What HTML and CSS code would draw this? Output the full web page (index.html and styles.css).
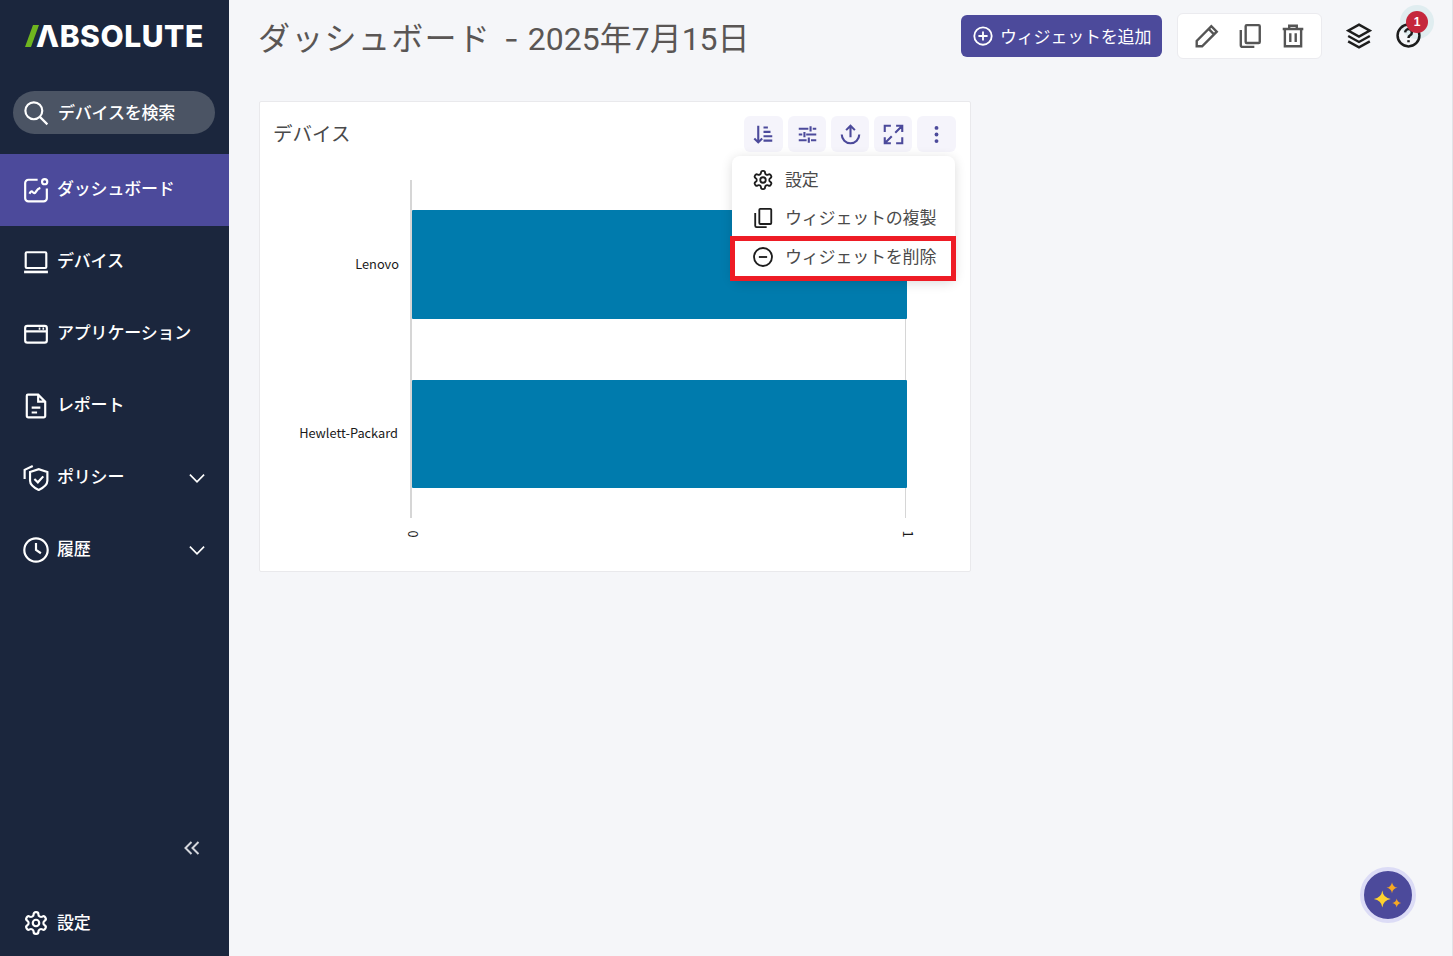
FILE: index.html
```html
<!DOCTYPE html>
<html lang="ja">
<head>
<meta charset="utf-8">
<title>ダッシュボード</title>
<link rel="stylesheet" href="styles.css">
</head>
<body>
<svg class="defs" xmlns="http://www.w3.org/2000/svg">
  <symbol id="gear" viewBox="0 0 24 24"><path d="M12.22 2h-.44a2 2 0 0 0-2 2v.18a2 2 0 0 1-1 1.73l-.43.25a2 2 0 0 1-2 0l-.15-.08a2 2 0 0 0-2.73.73l-.22.38a2 2 0 0 0 .73 2.73l.15.1a2 2 0 0 1 1 1.72v.51a2 2 0 0 1-1 1.74l-.15.09a2 2 0 0 0-.73 2.73l.22.38a2 2 0 0 0 2.73.73l.15-.08a2 2 0 0 1 2 0l.43.25a2 2 0 0 1 1 1.73V20a2 2 0 0 0 2 2h.44a2 2 0 0 0 2-2v-.18a2 2 0 0 1 1-1.73l.43-.25a2 2 0 0 1 2 0l.15.08a2 2 0 0 0 2.73-.73l.22-.39a2 2 0 0 0-.73-2.73l-.15-.08a2 2 0 0 1-1-1.74v-.5a2 2 0 0 1 1-1.74l.15-.09a2 2 0 0 0 .73-2.73l-.22-.38a2 2 0 0 0-2.73-.73l-.15.08a2 2 0 0 1-2 0l-.43-.25a2 2 0 0 1-1-1.73V4a2 2 0 0 0-2-2z"/><circle cx="12" cy="12" r="3"/></symbol>
  <symbol id="copy" viewBox="0 0 24 24"><rect x="8" y="2" width="13" height="16.500" rx="1"/><path d="M3.500 6.500V20.500a1.500 1.500 0 0 0 1.500 1.500H16"/></symbol>
  <symbol id="chev" viewBox="0 0 24 24"><path d="M3.500 8 12 16.500 20.500 8"/></symbol>
</svg>

<aside class="sidebar">
  <div class="logo" aria-label="ABSOLUTE">
    <svg class="logo-slash" viewBox="0 0 14 22"><polygon points="8,0 14,0 6,22 0,22"/></svg>
    <span class="logo-text">ΛBSOLUTE</span>
  </div>
  <div class="search">
    <svg class="ico" viewBox="0 0 24 24"><circle cx="10" cy="10" r="7.800"/><path d="m15.800 15.800 6.700 6.700"/></svg>
    <span>デバイスを検索</span>
  </div>
  <nav class="nav">
    <a class="nav-item active">
      <svg class="ico" viewBox="0 0 24 24"><path d="M13.500 2.500H5a3 3 0 0 0-3 3V19.500a3 3 0 0 0 3 3h14a3 3 0 0 0 3-3V10.500"/><circle cx="20" cy="4.300" r="2.400"/><path d="M6 15.500c1-2.200 2-2.800 3-1.500s2 1.300 3-.5 2-3 4-3.500"/></svg>
      <span>ダッシュボード</span>
    </a>
    <a class="nav-item">
      <svg class="ico" viewBox="0 0 24 24"><rect x="2.500" y="3" width="19" height="14.500" rx="1"/><path class="thick" d="M1 21.200h22"/></svg>
      <span>デバイス</span>
    </a>
    <a class="nav-item">
      <svg class="ico" viewBox="0 0 24 24"><rect x="2" y="4.500" width="20" height="15.500" rx="2"/><path d="M2 9.500h20M14.500 7h1.500M18 7h1.500"/></svg>
      <span>アプリケーション</span>
    </a>
    <a class="nav-item">
      <svg class="ico" viewBox="0 0 24 24"><path d="M3.500 2.500a1 1 0 0 1 1-1h9.500l6.500 6.500V21a1.500 1.500 0 0 1-1.500 1.500H5A1.500 1.500 0 0 1 3.500 21zM14 1.500V8h6.500M8 13.500h8M8 18h5"/></svg>
      <span>レポート</span>
    </a>
    <a class="nav-item">
      <svg class="ico" viewBox="0 0 24 24"><path d="M6.500 6.500 14.500 3.800l8 2.700v8c0 4-3.800 6.500-8 8.500-4.200-2-8-4.500-8-8.500z"/><path d="m10.500 13 3.200 3 5-5.500"/><path d="M1.500 13V4.500L9 1"/></svg>
      <span>ポリシー</span>
      <svg class="chev"><use href="#chev"/></svg>
    </a>
    <a class="nav-item">
      <svg class="ico" viewBox="0 0 24 24"><circle cx="12" cy="12" r="10.800"/><path d="M12 5.500V12l4.500 3"/></svg>
      <span>履歴</span>
      <svg class="chev"><use href="#chev"/></svg>
    </a>
  </nav>
  <div class="collapse">
    <svg viewBox="0 0 16 14"><path d="M7.500 1 1.500 7l6 6M14.500 1l-6 6 6 6"/></svg>
  </div>
  <a class="settings">
    <svg class="ico"><use href="#gear"/></svg>
    <span>設定</span>
  </a>
</aside>

<main class="main">
  <header class="topbar">
    <h1 class="title"><span class="title-kana">ダッシュボード</span> <span class="title-dash">-</span> 2025年7月15日</h1>
    <button class="add-btn">
      <svg viewBox="0 0 24 24"><circle cx="12" cy="12" r="9.500"/><path d="M12 7v10M7 12h10"/></svg>
      <span>ウィジェットを追加</span>
    </button>
    <div class="tools">
      <svg viewBox="0 0 24 24"><path d="M2.500 21.500v-5L16 3l5 5L7.500 21.500zM13.500 5.500l5 5"/></svg>
      <svg><use href="#copy"/></svg>
      <svg viewBox="0 0 24 24"><path d="M2.500 5.500h19M8.500 5V2.500h7V5M4.500 5.500V21.500h15V5.500M9.500 9.500v8M14.500 9.500v8"/></svg>
    </div>
    <svg class="layers" viewBox="0 0 24 24"><path d="m12 1.500 10 5.500-10 5.500L2 7zM2 12l10 5.500L22 12M2 17l10 5.500L22 17"/></svg>
    <div class="help">
      <div class="halo"></div>
      <svg viewBox="0 0 24 24"><circle cx="12" cy="12" r="10.500"/><path d="M8.800 9a3.200 3.200 0 1 1 4.800 2.800c-1 .6-1.600 1.200-1.600 2.500"/><path d="M12 16.500v2"/></svg>
      <div class="badge">1</div>
    </div>
  </header>

  <section class="card">
    <div class="card-head">
      <h2 class="card-title">デバイス</h2>
      <div class="card-actions">
        <div class="act w39"><svg viewBox="0 0 24 24"><path d="M6 2v19M1.500 16.500 6 21l4.500-4.500M12 4h5M12 9h8M12 14h10M12 19h10"/></svg></div>
        <div class="act w38"><svg viewBox="0 0 24 24"><path d="M2 5.500h11M18 5.500h4M15.500 2.500v6M2 12h4M10.500 12H22M8.500 9v6M2 18.500h9M16 18.500h6M13.500 15.500v6"/></svg></div>
        <div class="act w38"><svg viewBox="0 0 24 24"><path d="M7 7l5-5 5 5M12 2V15M2 12a10 10 0 0 0 20 0"/></svg></div>
        <div class="act w38"><svg viewBox="0 0 24 24"><path d="M9 2H2v7M22 15v7h-7M15 2h7v7M22 2l-8 8M2 15v7h7M2 22l8-8"/></svg></div>
        <div class="act w39"><svg class="dots" viewBox="0 0 24 24"><circle cx="12" cy="4.500" r="2.200"/><circle cx="12" cy="12" r="2.200"/><circle cx="12" cy="19.500" r="2.200"/></svg></div>
      </div>
    </div>
    <svg class="chart" viewBox="0 0 711 424">
      <path class="axis-l" d="M151 0V338"/>
      <path class="axis-r" d="M645.500 0V338"/>
      <rect class="bar" x="152" y="30" width="495" height="109" rx="1"/>
      <rect class="bar" x="152" y="200" width="495" height="108" rx="1"/>
      <text class="tick" x="139" y="89" text-anchor="end">Lenovo</text>
      <text class="tick" x="138" y="258" text-anchor="end">Hewlett-Packard</text>
      <text class="tick" transform="translate(152 354) rotate(90)" text-anchor="middle" x="0" y="4">0</text>
      <text class="tick" transform="translate(647 354) rotate(90)" text-anchor="middle" x="0" y="4">1</text>
    </svg>

    <div class="menu">
      <div class="menu-item">
        <svg><use href="#gear"/></svg><span>設定</span>
      </div>
      <div class="menu-item">
        <svg><use href="#copy"/></svg><span>ウィジェットの複製</span>
      </div>
      <div class="menu-item highlighted">
        <svg viewBox="0 0 24 24"><circle cx="12" cy="12" r="9.800"/><path d="M7.500 12h9"/></svg><span>ウィジェットを削除</span>
      </div>
    </div>
  </section>

  <button class="assist">
    <svg viewBox="0 0 32 32">
      <path class="s1" d="M10.300 11.500Q11.300 19 18.800 20 11.300 21 10.300 28.500 9.300 21 1.800 20 9.300 19 10.300 11.500z"/>
      <path class="s2" d="M20 3.200Q20.700 8 25.500 8.700 20.700 9.400 20 14.200 19.300 9.400 14.500 8.700 19.300 8 20 3.200z"/>
      <path class="s2" d="M24.700 19.500Q25.300 23.400 29.200 24 25.300 24.600 24.700 28.500 24.100 24.600 20.200 24 24.100 23.400 24.700 19.500z"/>
    </svg>
  </button>
</main>
</body>
</html>
```

FILE: styles.css
```css
* { box-sizing: border-box; }

html, body { height: 100%; }

body {
  margin: 0;
  display: flex;
  height: 956px;
  overflow: hidden;
  background: #f5f6f9;
  font-family: "Noto Sans CJK JP", "Noto Sans", sans-serif;
  color: #4a4a4a;
}

.defs { display: none; }

svg { display: block; fill: none; stroke: currentColor; stroke-width: 2; flex: none; }

/* Sidebar */
.sidebar {
  width: 229px;
  flex: none;
  display: flex;
  flex-direction: column;
  background: #1b263d;
  color: #fff;
}

.logo {
  height: 91px;
  padding: 25px 0 0 25px;
  display: flex;
  align-items: flex-start;
}

.logo-slash { width: 14px; height: 22px; fill: #6fb51f; stroke: none; }

.logo-text {
  font-family: Inter, sans-serif;
  font-weight: 800;
  font-size: 30px;
  line-height: 22px;
  letter-spacing: 0.55px;
  margin-left: -3px;
  color: #fff;
}

.search {
  margin: 0 14px 0 13px;
  height: 43px;
  border-radius: 22px;
  background: #4b5464;
  display: flex;
  align-items: center;
  padding-left: 10px;
  gap: 9px;
  font-size: 17px;
  font-weight: 500;
  letter-spacing: -0.2px;
}

.search span { margin-bottom: 2px; }

.ico { width: 26px; height: 26px; }

.nav { margin-top: 20px; display: flex; flex-direction: column; }

.nav-item {
  height: 72px;
  display: flex;
  align-items: center;
  padding-left: 23px;
  gap: 8px;
  font-size: 17px;
  font-weight: 500;
  letter-spacing: -0.2px;
}

.nav-item span { margin-bottom: 6px; }

.nav-item.active { background: #4c4a9b; }

.nav-item .chev { width: 20px; height: 20px; margin-left: auto; margin-right: 22px; }

.thick { stroke-width: 2.400; }

.collapse { margin-top: auto; padding: 0 0 0 184px; color: #d4d6dc; }
.collapse svg { width: 16px; height: 14px; stroke-width: 2; }

.settings {
  display: flex;
  align-items: center;
  gap: 8px;
  padding: 54px 0 20px 23px;
  font-size: 17px;
  font-weight: 500;
  letter-spacing: -0.2px;
}

.settings span { margin-bottom: 2px; }

/* Main */
.main {
  flex: 1;
  min-width: 0;
  padding: 0 0 0 30px;
  position: relative;
  border-right: 1px solid #e2e3e7;
}

.topbar {
  height: 101px;
  padding-top: 13px;
  display: flex;
  align-items: flex-start;
}

.title {
  margin: 1px 0 0 -1px;
  flex: 1;
  font-family: Roboto, "Noto Sans CJK JP", sans-serif;
  font-size: 32px;
  line-height: 50px;
  font-weight: 400;
  color: #5a5655;
}

.title-kana { letter-spacing: 1.3px; }
.title-dash { font-family: Inter, sans-serif; margin: 0 1px 0 5px; }

.add-btn {
  width: 201px;
  height: 42px;
  margin-top: 2px;
  border: 0;
  border-radius: 6px;
  background: #4c4a9b;
  color: #fff;
  display: flex;
  align-items: center;
  padding: 0 0 0 11px;
  gap: 6px;
  font: inherit;
  font-size: 17px;
  letter-spacing: -0.2px;
}

.add-btn span { margin-bottom: 2px; }

.add-btn svg { width: 22px; height: 22px; }

.tools {
  width: 145px;
  height: 46px;
  margin-left: 15px;
  background: #fff;
  border: 1px solid #ebebef;
  border-radius: 6px;
  display: flex;
  align-items: center;
  justify-content: center;
  gap: 17px;
  color: #555;
}

.tools svg { width: 26px; height: 26px; stroke-width: 2.200; }

.layers { width: 26px; height: 26px; margin: 10px 0 0 24px; color: #1d1d1d; stroke-width: 2.200; }

.help { position: relative; width: 26px; height: 26px; margin: 10px 30px 0 24px; color: #1d1d1d; }
.help svg { width: 25px; height: 25px; position: relative; stroke-width: 2.400; }

.halo {
  position: absolute;
  width: 34px;
  height: 34px;
  left: 4px;
  top: -18px;
  border-radius: 50%;
  background: #e0edf0;
}

.badge {
  position: absolute;
  left: 10px;
  top: -12px;
  width: 22px;
  height: 22px;
  border-radius: 50%;
  background: #c5283d;
  color: #fff;
  font-family: "Liberation Sans", sans-serif;
  font-size: 12px;
  font-weight: 700;
  line-height: 22px;
  text-align: center;
}

/* Card */
.card {
  position: relative;
  width: 712px;
  height: 471px;
  background: #fff;
  border: 1px solid #e9e9ec;
  border-radius: 2px;
}

.card-head {
  display: flex;
  justify-content: space-between;
  align-items: center;
  padding: 14px 14px 0 13px;
  height: 50px;
}

.card-title { margin: 0 0 3px; font-size: 19.500px; font-weight: 400; color: #4a4a4a; }

.card-actions { display: flex; gap: 5px; }

.act {
  height: 36px;
  border-radius: 6px;
  background: #f5f4fb;
  display: flex;
  align-items: center;
  justify-content: center;
  color: #4c4a9b;
}
.w39 { width: 39px; }
.w38 { width: 38px; }
.act svg { width: 21px; height: 21px; stroke-width: 2.400; }
.act .dots { fill: currentColor; stroke: none; }

.chart { width: 711px; height: 424px; margin-top: 28px; }
.axis-l { stroke: #c8c8c8; stroke-width: 1.500; }
.axis-r { stroke: #d6d6d6; stroke-width: 1; }
.bar { fill: #007bad; stroke: none; }
.tick { font-family: "Noto Sans CJK JP", sans-serif; font-size: 12.800px; fill: #1a1a1a; stroke: none; }

/* Menu over the card */
.menu {
  position: absolute;
  left: 472px;
  top: 54px;
  width: 223px;
  height: 125px;
  background: #fff;
  border-radius: 8px;
  box-shadow: 0 2px 12px rgba(0, 0, 0, .14);
  padding-top: 5px;
  font-size: 17px;
  letter-spacing: -0.2px;
  color: #4a4a4a;
}

.menu-item {
  height: 38px;
  display: flex;
  align-items: center;
  padding-left: 20px;
  gap: 11px;
}

.menu-item span { margin-bottom: 4px; }

.menu-item svg { width: 22px; height: 22px; color: #1d1d1d; }

.menu-item.highlighted {
  position: absolute;
  left: -2px;
  right: -1px;
  top: 80px;
  height: 45px;
  padding: 0 0 3px 17px;
  border: 5px solid #ee1c25;
}

/* Assistant button */
.assist {
  position: absolute;
  left: 1131px;
  top: 867px;
  width: 56px;
  height: 56px;
  padding: 0;
  border: 4px solid #dcdcf6;
  border-radius: 50%;
  background: #4c4a9b;
  display: flex;
  align-items: center;
  justify-content: center;
}

.assist svg { width: 32px; height: 32px; stroke: none; }
.s1 { fill: #ffd22e; }
.s2 { fill: #f7a823; }
```
